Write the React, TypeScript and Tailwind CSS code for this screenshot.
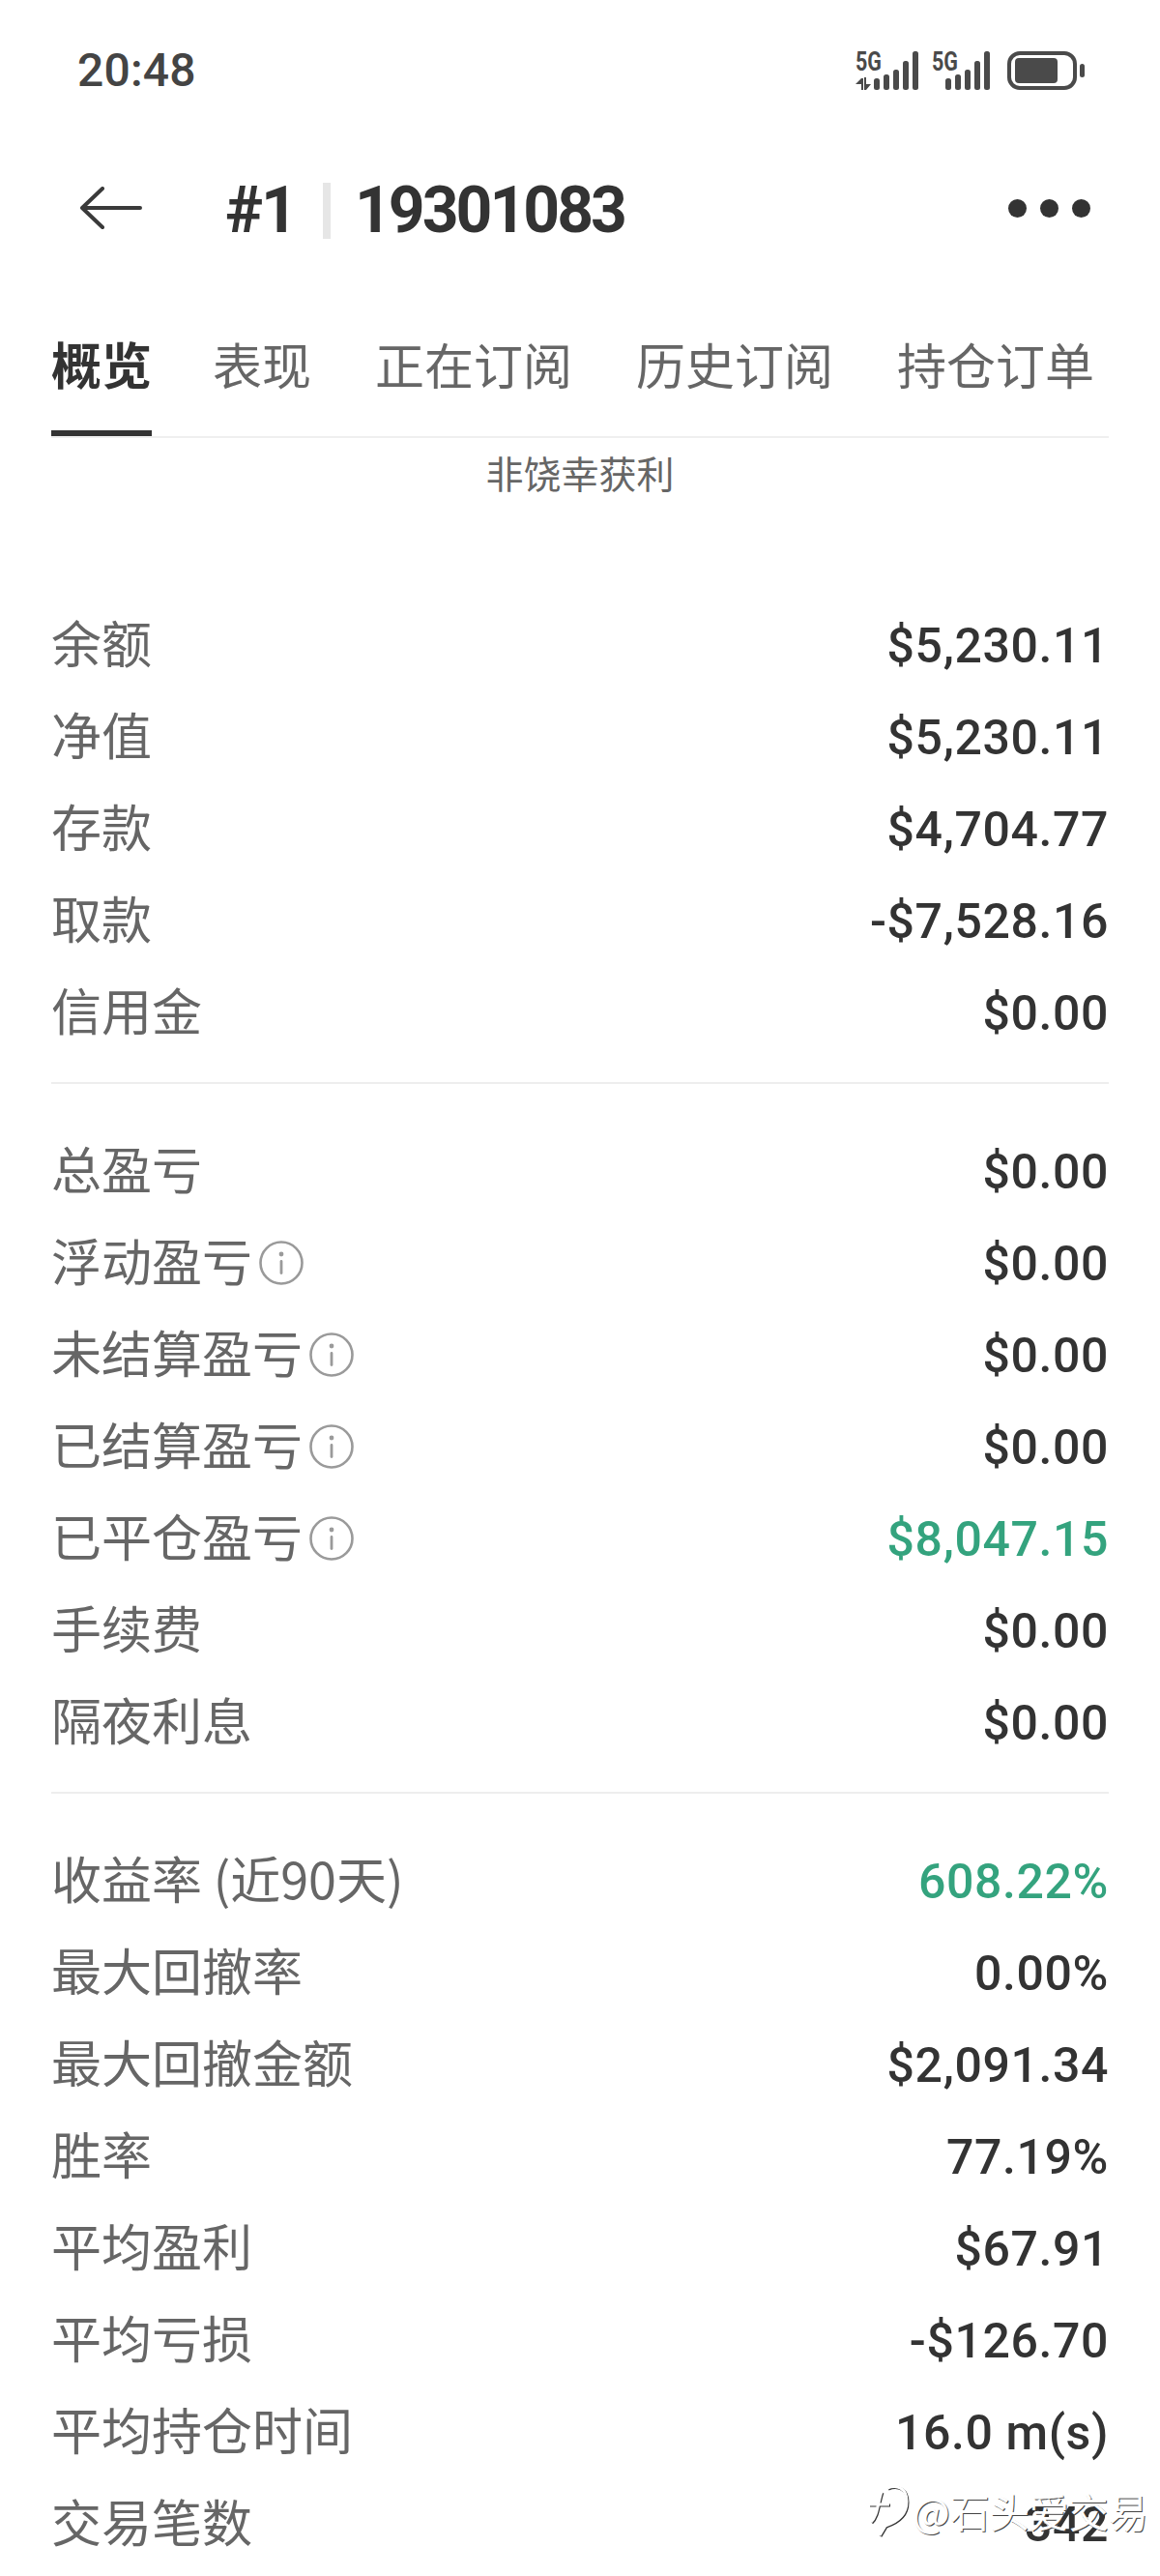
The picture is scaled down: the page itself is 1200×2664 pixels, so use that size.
import React from "react";

const CJK = "font-['Noto_Sans_CJK_SC','Noto_Sans',sans-serif]";

function InfoIcon() {
  return (
    <svg width="46" height="46" viewBox="0 0 46 46" className="ml-[7px] shrink-0" fill="none">
      <circle cx="23" cy="23" r="21.5" stroke="#9a9a9a" strokeWidth="2.6" />
      <circle cx="23" cy="14" r="2.4" fill="#9a9a9a" />
      <rect x="21.6" y="20" width="2.8" height="15" rx="1.4" fill="#9a9a9a" />
    </svg>
  );
}

// bars share the same heights on both SIMs, only the first one has the data arrows
function Signal({ first }: { first?: boolean }) {
  const bars = [12, 16, 21, 30, 40];
  const start = first ? 19 : 14;
  return (
    <svg width={first ? 66 : 60} height="40" viewBox={first ? "0 0 66 40" : "0 0 60 40"} fill="#4a4a4a" className="overflow-visible">
      <text x="0" y="20" fontSize="27" fontWeight="700" fontFamily="Roboto" textLength="27" lengthAdjust="spacingAndGlyphs">5G</text>
      {first && <path d="M0 34 L6 28 H8 V40 H6 V34 Z M9 27 H11 V34 H16 L11 40 H9 Z" />}
      {bars.map((h, i) => (
        <rect key={i} x={start + i * 10} y={40 - h} width="6" height={h} rx="2.5" />
      ))}
    </svg>
  );
}

function Row({ label, value, info, green }: { label: string; value: string; info?: boolean; green?: boolean }) {
  return (
    <div className="flex h-[95px] items-center justify-between">
      <div className="flex items-center">
        <span className={`${CJK} pb-[5px] text-[52px] leading-none text-[#666666]`}>{label}</span>
        {info && <InfoIcon />}
      </div>
      <span className={`font-['Roboto',sans-serif] pt-[3px] text-[50px] font-medium leading-none tracking-[0.6px] ${green ? "text-[#34a37e]" : "text-[#333333]"}`}>
        {value}
      </span>
    </div>
  );
}

export default function App() {
  const tabs = ["表现", "正在订阅", "历史订阅", "持仓订单"];
  const accountRows = [
    ["余额", "$5,230.11"],
    ["净值", "$5,230.11"],
    ["存款", "$4,704.77"],
    ["取款", "-$7,528.16"],
    ["信用金", "$0.00"],
  ];
  const statRows = [
    ["收益率 (近90天)", "608.22%"],
    ["最大回撤率", "0.00%"],
    ["最大回撤金额", "$2,091.34"],
    ["胜率", "77.19%"],
    ["平均盈利", "$67.91"],
    ["平均亏损", "-$126.70"],
    ["平均持仓时间", "16.0 m(s)"],
    ["交易笔数", "342"],
  ];

  return (
    <div className="relative h-[2664px] w-[1200px] overflow-hidden bg-white">
      {/* Status bar */}
      <div className="flex h-[146px] items-center justify-between pl-[80px] pr-[78px]">
        <span className="font-['Roboto',sans-serif] text-[48px] font-medium leading-none tracking-[0.2px] text-[#444444]">20:48</span>
        <div className="flex items-center gap-[13px]">
          <Signal first />
          <Signal />
          <svg width="80" height="40" viewBox="0 0 80 40" fill="none" className="ml-[5px]">
            <rect x="2" y="2" width="68" height="36" rx="11" stroke="#4a4a4a" strokeWidth="4" />
            <rect x="8" y="7" width="44" height="26" rx="4" fill="#4a4a4a" />
            <rect x="75" y="13" width="5" height="14" rx="2.5" fill="#4a4a4a" />
          </svg>
        </div>
      </div>

      {/* Header */}
      <div className="flex h-[144px] items-center justify-between pl-[83px] pr-[72px]">
        <div className="flex items-center">
          <svg width="64" height="44" viewBox="0 0 64 44" fill="none" stroke="#3a3a3a" strokeWidth="4" strokeLinecap="round" strokeLinejoin="round" className="mb-[6px]">
            <path d="M62 22 H3 M23 2 L2 22 L23 42" />
          </svg>
          <span className="ml-[86px] font-['Roboto',sans-serif] text-[66px] font-bold leading-none tracking-[-2px] text-[#333333]">#1</span>
          <span className="ml-[28px] h-[58px] w-[8px] bg-[#e6e6e6]" />
          <span className="ml-[25px] font-['Roboto',sans-serif] text-[66px] font-bold leading-none tracking-[-3px] text-[#333333]">19301083</span>
        </div>
        <div className="mb-[6px] flex gap-[14px]">
          <span className="h-[19px] w-[19px] rounded-full bg-[#333333]" />
          <span className="h-[19px] w-[19px] rounded-full bg-[#333333]" />
          <span className="h-[19px] w-[19px] rounded-full bg-[#333333]" />
        </div>
      </div>

      {/* Tabs */}
      <div className="mx-[53px] mt-[22px] flex h-[141px] gap-[66px] border-b-[2px] border-[#efefef] pt-[34px]">
        <div className="-mr-[3px] h-[105px] border-b-[6px] border-[#333333]">
          <span className={`${CJK} block text-[52px] font-bold leading-[60px] text-[#333333]`}>概览</span>
        </div>
        {tabs.map((t) => (
          <span key={t} className={`${CJK} block text-[51px] leading-[60px] text-[#666666]`}>{t}</span>
        ))}
      </div>

      <div className={`${CJK} mt-[10px] text-center text-[39px] leading-[50px] text-[#666666]`}>非饶幸获利</div>

      <div className="mx-[53px] mt-[106px]">
        <div className="border-b-[2px] border-[#eeeeee] pb-[25px]">
          {accountRows.map(([l, v]) => <Row key={l} label={l} value={v} />)}
        </div>
        <div className="border-b-[2px] border-[#eeeeee] pb-[25px] pt-[42px]">
          <Row label="总盈亏" value="$0.00" />
          <Row label="浮动盈亏" value="$0.00" info />
          <Row label="未结算盈亏" value="$0.00" info />
          <Row label="已结算盈亏" value="$0.00" info />
          <Row label="已平仓盈亏" value="$8,047.15" info green />
          <Row label="手续费" value="$0.00" />
          <Row label="隔夜利息" value="$0.00" />
        </div>
        <div className="pt-[42px]">
          {statRows.map(([l, v]) => (
            <Row key={l} label={l} value={v} green={v === "608.22%"} />
          ))}
        </div>
      </div>

      {/* Watermark */}
      <div className="absolute left-[896px] top-[2568px] flex items-center gap-[4px]">
        <svg width="44" height="56" viewBox="0 0 44 56" fill="none" stroke="#ffffff" strokeWidth="3" className="drop-shadow-[1px_1px_0_#333333]">
          <path d="M22 5 C32 1 42 5 42 19 C42 33 32 40 20 44 L14 54 M3 22 H24 M16 9 C12 20 12 34 5 40" />
        </svg>
        <span className={`${CJK} text-[41px] leading-none text-white [text-shadow:1px_1px_0_#444444]`}>@石头爱交易</span>
      </div>
    </div>
  );
}
